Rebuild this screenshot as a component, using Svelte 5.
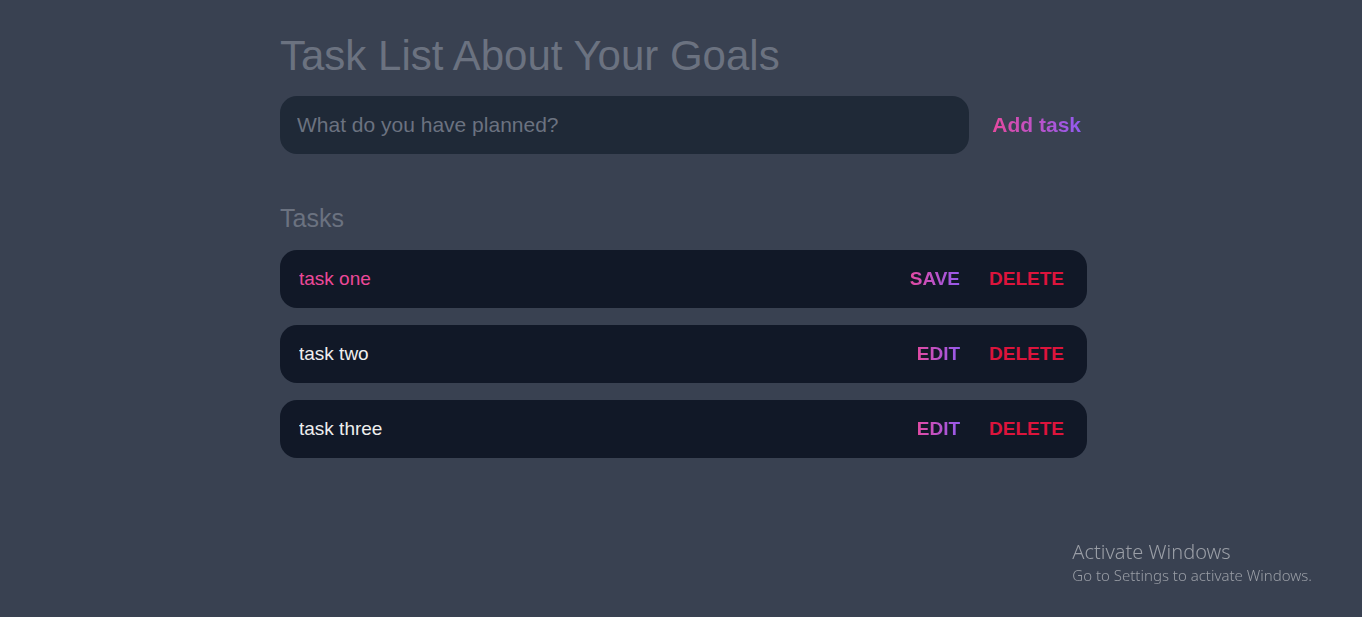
<script>
  let draft = $state('');
  let tasks = $state([
    { id: 1, text: 'task one', editing: true },
    { id: 2, text: 'task two', editing: false },
    { id: 3, text: 'task three', editing: false }
  ]);

  function add(event) {
    event.preventDefault();
    if (!draft.trim()) return;
    tasks.push({ id: Date.now(), text: draft, editing: false });
    draft = '';
  }

  function remove(id) {
    tasks = tasks.filter((task) => task.id !== id);
  }
</script>

<div class="page">
  <header>
    <h1>Task List About Your Goals</h1>
    <form onsubmit={add}>
      <input class="new-task" type="text" placeholder="What do you have planned?" aria-label="New task" bind:value={draft} />
      <button class="add" type="submit">Add task</button>
    </form>
  </header>

  <main>
    <h2>Tasks</h2>
    <ul>
      {#each tasks as task (task.id)}
        <li>
          <input class="text" class:editing={task.editing} type="text" aria-label="Task" readonly={!task.editing} bind:value={task.text} />
          <div class="actions">
            <button class="edit" type="button" onclick={() => (task.editing = !task.editing)}>{task.editing ? 'Save' : 'Edit'}</button>
            <button class="delete" type="button" onclick={() => remove(task.id)}>Delete</button>
          </div>
        </li>
      {/each}
    </ul>
  </main>

  <aside>
    <p class="notice-title">Activate Windows</p>
    <p class="notice-text">Go to Settings to activate Windows.</p>
  </aside>
</div>

<style>
  :global(body) {
    background: #394151;
  }
  :global(*) {
    box-sizing: border-box;
    margin: 0;
  }
  .page {
    min-height: 100vh;
    padding: 32px 16px 32px 21px;
    font-family: 'Liberation Sans', Arial, sans-serif;
  }
  input,
  button {
    border: 0;
    outline: none;
    background: none;
    font-family: inherit;
  }
  header,
  main {
    max-width: 807px;
    margin: 0 auto;
  }
  h1 {
    font-size: 42px;
    line-height: 48px;
    font-weight: 400;
    color: #6b7280;
    margin-bottom: 16px;
  }
  form {
    display: flex;
  }
  .new-task {
    flex: 1;
    min-width: 0;
    height: 58px;
    padding: 0 17px;
    border-radius: 17px;
    background: #1f2937;
    color: #eee;
    font-size: 21px;
    margin-right: 17px;
  }
  .new-task::placeholder {
    color: #6b7280;
    opacity: 1;
  }
  button {
    font-weight: 700;
    cursor: pointer;
  }
  .add,
  .edit {
    color: transparent;
    background-image: linear-gradient(to right, #ec4899, #8b5cf6);
    background-clip: text;
    -webkit-background-clip: text;
  }
  .add {
    font-size: 21px;
    padding: 0 6px;
  }
  h2 {
    margin-top: 48px;
    font-size: 25px;
    line-height: 32px;
    font-weight: 400;
    color: #6b7280;
    margin-bottom: 16px;
  }
  ul {
    list-style: none;
    padding: 0;
    display: grid;
    gap: 17px;
  }
  li {
    display: flex;
    align-items: center;
    height: 58px;
    padding: 0 17px;
    border-radius: 17px;
    background: #111827;
  }
  .text {
    flex: 1;
    min-width: 0;
    padding: 0 2px;
    font-size: 19px;
    color: #eee;
  }
  .text.editing {
    color: #ec4899;
  }
  .actions {
    display: flex;
    gap: 17px;
  }
  .edit,
  .delete {
    font-size: 19px;
    padding: 0 6px;
    text-transform: uppercase;
  }
  .delete {
    color: #dc143c;
  }
  aside {
    position: fixed;
    right: 50px;
    bottom: 32px;
    color: #9a9ea6;
    font-family: 'Noto Sans', sans-serif;
    font-weight: 300;
  }
  .notice-title {
    font-size: 20px;
    line-height: 26px;
  }
  .notice-text {
    font-size: 15px;
    line-height: 20px;
  }
</style>
